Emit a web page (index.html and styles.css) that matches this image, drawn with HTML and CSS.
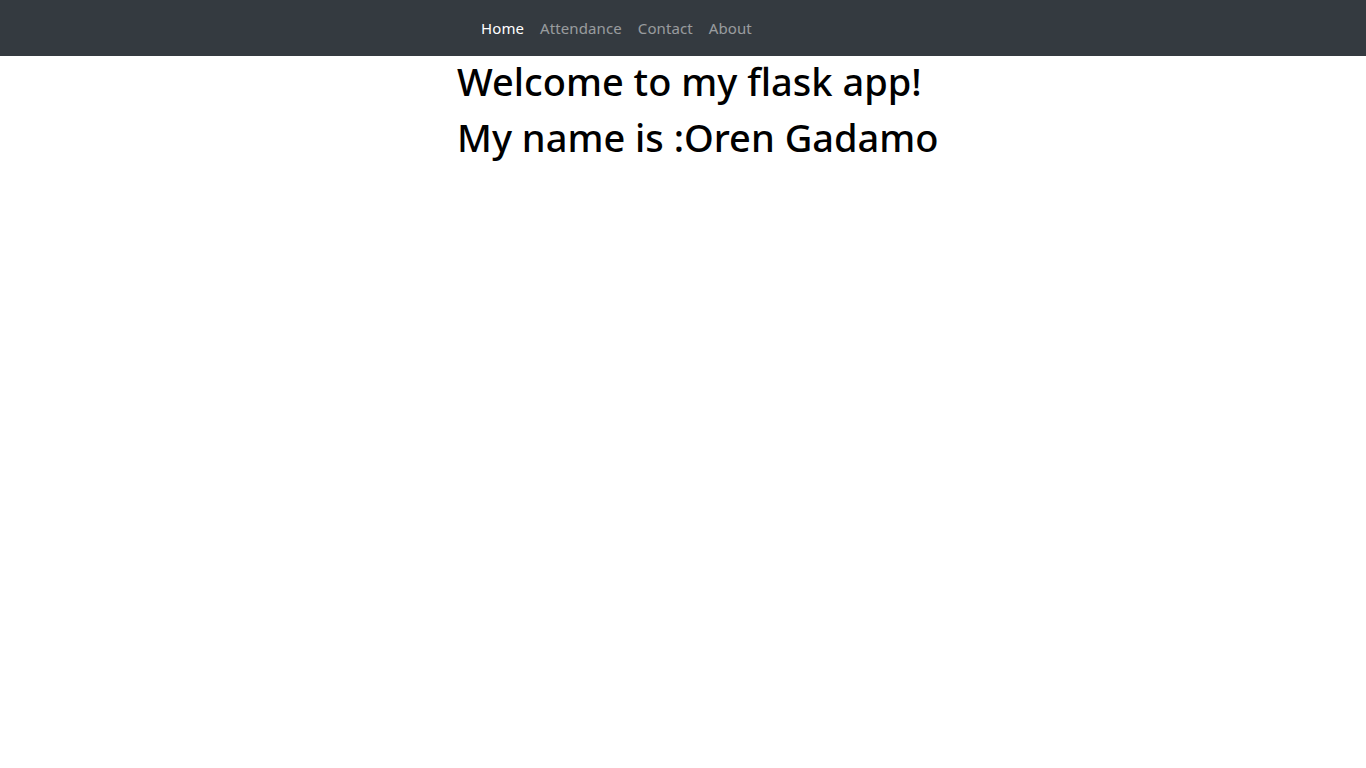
FILE: index.html
```html
<!DOCTYPE html>
<html lang="en">
<head>
<meta charset="utf-8">
<title>Home</title>
<link rel="stylesheet" href="styles.css">
</head>
<body>
<nav class="navbar">
  <div class="wrap">
    <ul class="nav">
      <li><a class="nav-link active" href="#">Home</a></li>
      <li><a class="nav-link" href="#">Attendance</a></li>
      <li><a class="nav-link" href="#">Contact</a></li>
      <li><a class="nav-link" href="#">About</a></li>
    </ul>
  </div>
</nav>
<main class="wrap content">
  <h1 class="title">Welcome to my flask app!</h1>
  <h1 class="title">My name is :Oren Gadamo</h1>
</main>
</body>
</html>
```

FILE: styles.css
```css
html, body {
  margin: 0;
  padding: 0;
  background: #fff;
  font-family: "Noto Sans", "Open Sans", sans-serif;
  color: #212529;
}
.wrap {
  width: 452px;
  margin: 0 auto;
}
.navbar {
  background: #343a40;
  height: 56px;
  display: flex;
  align-items: center;
}
.nav {
  list-style: none;
  margin: 0;
  padding: 0 0 0 16px;
  display: flex;
}
.nav-link {
  display: block;
  padding: 8px 8px;
  font-size: 15px;
  letter-spacing: 0.1px;
  line-height: 24px;
  color: rgba(255,255,255,0.5);
  text-decoration: none;
}
.nav-link.active {
  color: #fff;
}
.content {
  padding-top: 1px;
}
.title {
  margin: 0 0 8px 0;
  font-size: 38px;
  font-weight: 550;
  line-height: 48px;
  color: #000;
  white-space: nowrap;
}
```
